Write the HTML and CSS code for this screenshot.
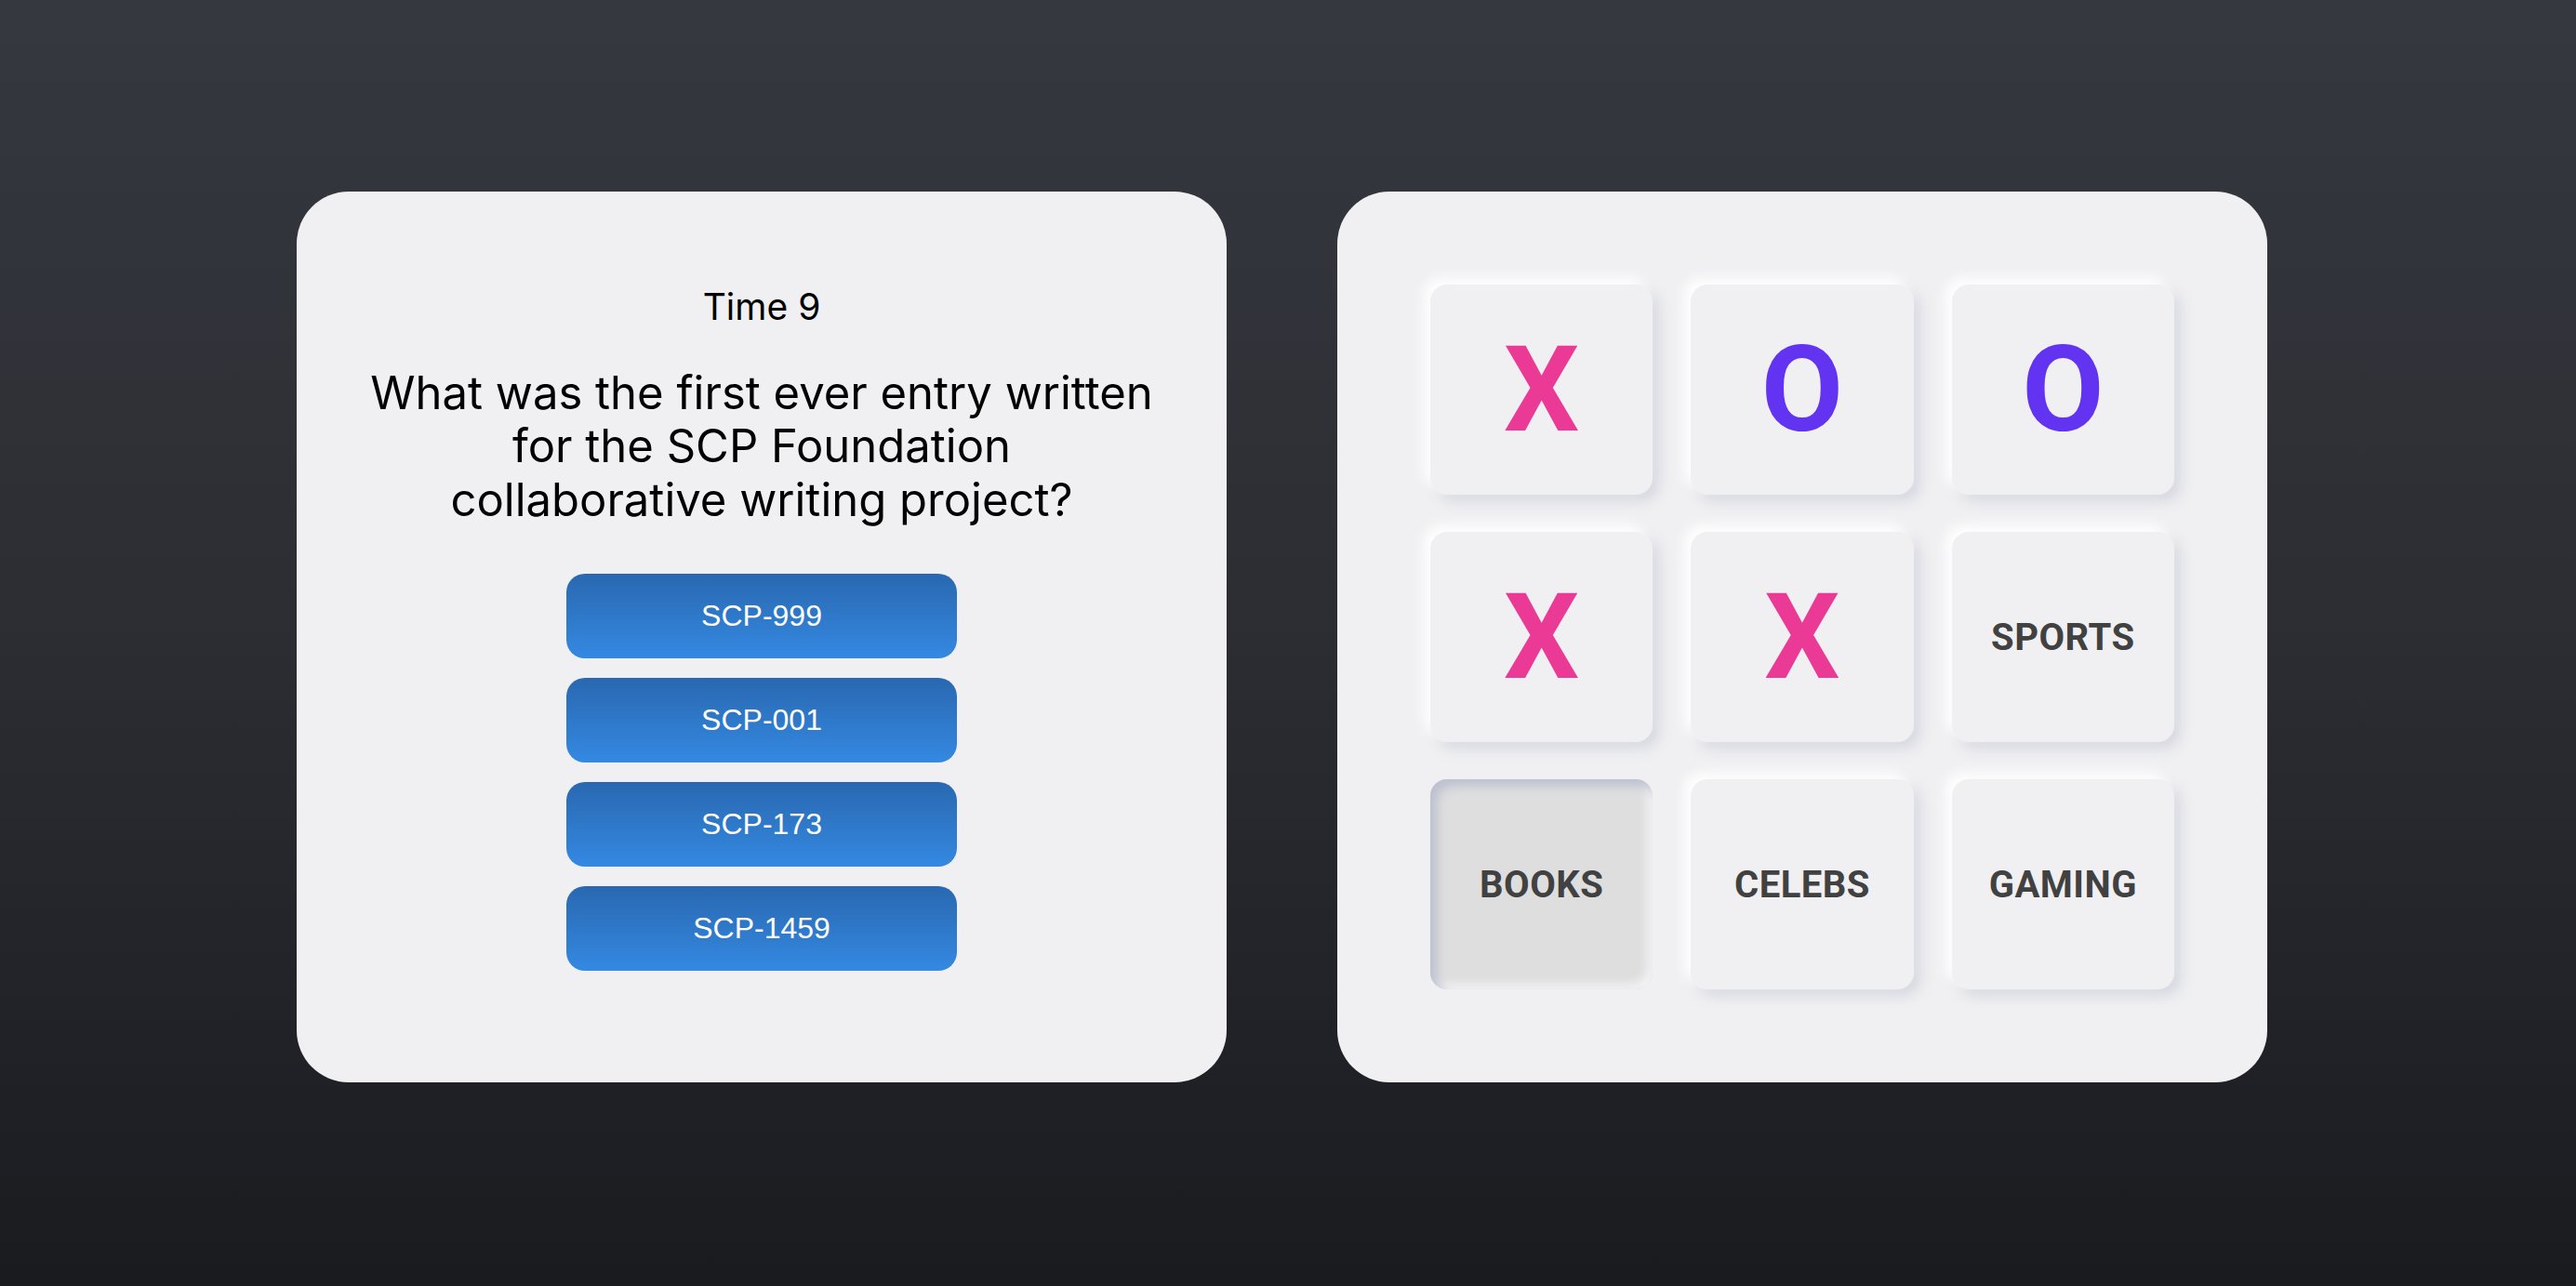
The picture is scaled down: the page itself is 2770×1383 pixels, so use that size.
FILE: index.html
```html
<!DOCTYPE html>
<html lang="en">
<head>
<meta charset="utf-8">
<title>Trivia Tic Tac Toe</title>
<link rel="stylesheet" href="styles.css">
</head>
<body>
<main class="stage">
  <section class="card quiz">
    <div class="timer">Time 9</div>
    <h1 class="question">What was the first ever entry written<br>for the SCP Foundation<br>collaborative writing project?</h1>
    <div class="answers">
      <button class="answer">SCP-999</button>
      <button class="answer">SCP-001</button>
      <button class="answer">SCP-173</button>
      <button class="answer">SCP-1459</button>
    </div>
  </section>
  <section class="card board">
    <div class="tile"><span class="mark x">X</span></div>
    <div class="tile"><span class="mark o">O</span></div>
    <div class="tile"><span class="mark o">O</span></div>
    <div class="tile"><span class="mark x">X</span></div>
    <div class="tile"><span class="mark x">X</span></div>
    <div class="tile"><span class="label">SPORTS</span></div>
    <div class="tile pressed"><span class="label">BOOKS</span></div>
    <div class="tile"><span class="label">CELEBS</span></div>
    <div class="tile"><span class="label">GAMING</span></div>
  </section>
</main>
</body>
</html>
```
FILE: styles.css
```css
html, body {
  margin: 0;
  padding: 0;
}

body {
  width: 2770px;
  height: 1383px;
  background: linear-gradient(180deg, #35383e 0%, #2b2d33 50%, #1a1b1f 100%);
  font-family: "Inter", "Noto Sans", sans-serif;
  overflow: hidden;
}

.stage {
  display: flex;
  gap: 119px;
  padding: 206px 0 0 319px;
}

.card {
  box-sizing: border-box;
  width: 1000px;
  height: 958px;
  padding: 100px;
  background: #f0f0f2;
  border-radius: 56px;
}

.quiz {
  display: flex;
  flex-direction: column;
  align-items: center;
  padding: 100px 40px;
}

.timer {
  font-size: 39px;
  line-height: 48px;
  color: #000;
}

.question {
  margin: 40px 0 0;
  font-size: 49px;
  font-weight: 400;
  line-height: 57.4px;
  text-align: center;
  white-space: nowrap;
  color: #000;
}

.answers {
  margin-top: 51px;
  display: flex;
  flex-direction: column;
  gap: 21px;
}

.answer {
  width: 420px;
  height: 91px;
  border: none;
  border-radius: 20px;
  background: linear-gradient(180deg, #2968b0 0%, #3489e2 100%);
  color: #fff;
  font-family: "Liberation Sans", Arial, sans-serif;
  font-size: 32px;
  padding: 0;
}

.board {
  display: grid;
  grid-template-columns: repeat(3, 1fr);
  grid-template-rows: repeat(3, 1fr);
  column-gap: 41px;
  row-gap: 40px;
}

.tile {
  display: flex;
  align-items: center;
  justify-content: center;
  background: #f0f0f2;
  border-radius: 18px;
  box-shadow: -7px -7px 14px #ffffff, 7px 7px 14px rgba(184, 186, 204, 0.45);
}

.tile.pressed {
  background: #dedede;
  box-shadow: inset 7px 7px 12px #bcc0d0, inset -6px -6px 10px #f3f3f7;
}

.mark {
  font-family: "Roboto", sans-serif;
  font-weight: 700;
  font-size: 128px;
  line-height: 1;
}

.mark.x {
  color: #eb3a96;
}

.mark.o {
  color: #6233f0;
}

.label {
  font-family: "Roboto", sans-serif;
  font-weight: 700;
  font-size: 40px;
  letter-spacing: 0.5px;
  color: #414141;
}
```
